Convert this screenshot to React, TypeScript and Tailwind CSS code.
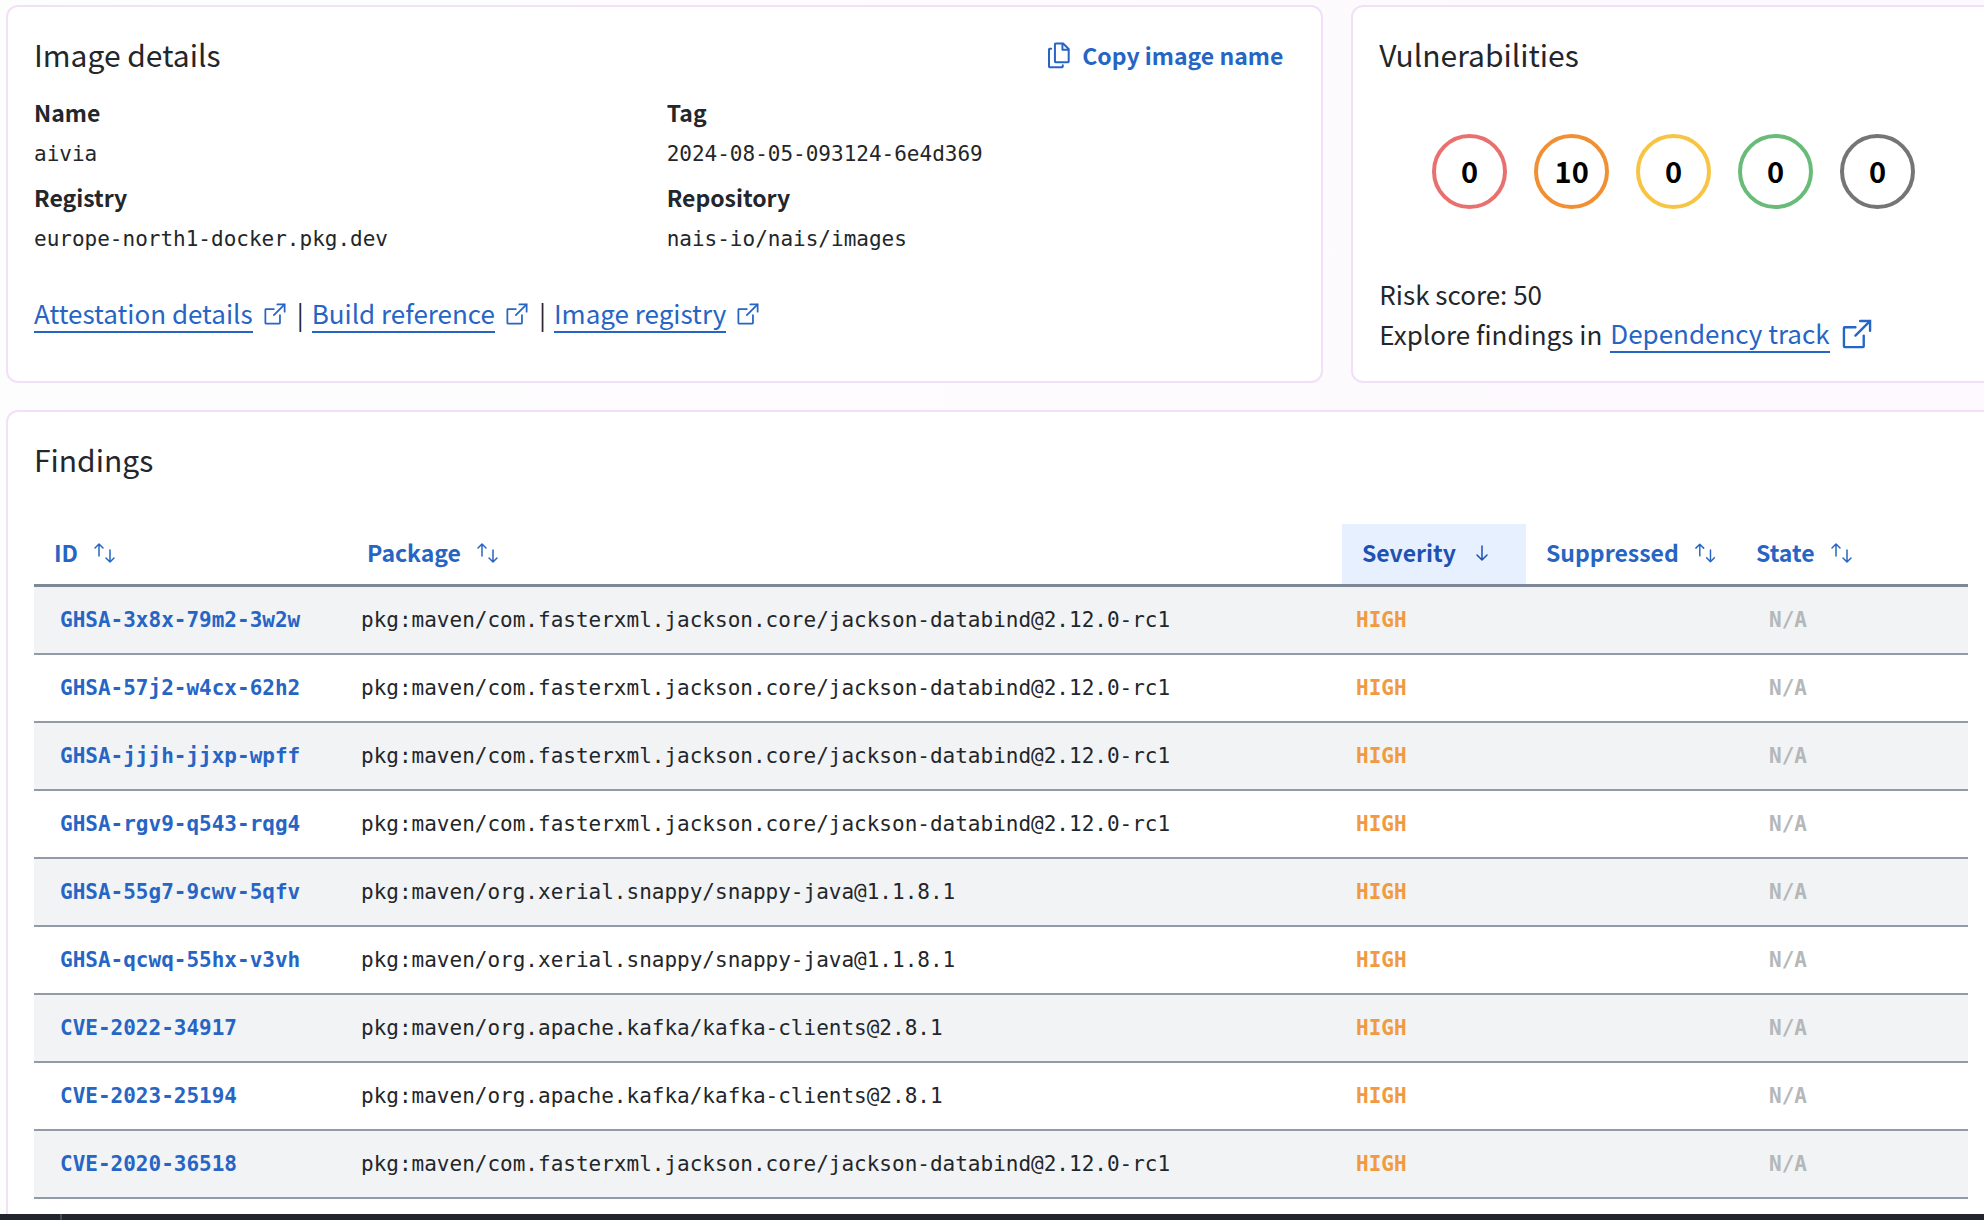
import React from "react";

const sans = "font-['Noto_Sans_CJK_JP','Noto_Sans',sans-serif]";
const mono = "font-['DejaVu_Sans_Mono',monospace] text-[21px]";

const databind = "pkg:maven/com.fasterxml.jackson.core/jackson-databind@2.12.0-rc1";
const snappy = "pkg:maven/org.xerial.snappy/snappy-java@1.1.8.1";
const kafka = "pkg:maven/org.apache.kafka/kafka-clients@2.8.1";

const findings = [
  { id: "GHSA-3x8x-79m2-3w2w", pkg: databind },
  { id: "GHSA-57j2-w4cx-62h2", pkg: databind },
  { id: "GHSA-jjjh-jjxp-wpff", pkg: databind },
  { id: "GHSA-rgv9-q543-rqg4", pkg: databind },
  { id: "GHSA-55g7-9cwv-5qfv", pkg: snappy },
  { id: "GHSA-qcwq-55hx-v3vh", pkg: snappy },
  { id: "CVE-2022-34917", pkg: kafka },
  { id: "CVE-2023-25194", pkg: kafka },
  { id: "CVE-2020-36518", pkg: databind },
];

const severities = [
  { label: "Critical", count: 0, ring: "border-[#e8716f]" },
  { label: "High", count: 10, ring: "border-[#f09033]" },
  { label: "Medium", count: 0, ring: "border-[#f7c443]" },
  { label: "Low", count: 0, ring: "border-[#68bb78]" },
  { label: "Unassigned", count: 0, ring: "border-[#757575]" },
];

function ExternalIcon({ className }: { className: string }) {
  return (
    <svg viewBox="0 0 24 24" fill="none" stroke="currentColor" strokeWidth="1.5" strokeLinejoin="round" className={`text-[#2765c4] ${className}`} aria-hidden="true">
      <path d="M14 3.75h6.25V10" strokeLinejoin="miter" strokeLinecap="round" />
      <path d="M20 4l-9 9" strokeLinecap="round" />
      <path d="M11 7.75H4.25a.5.5 0 0 0-.5.5v11.5a.5.5 0 0 0 .5.5h11.5a.5.5 0 0 0 .5-.5V13" strokeLinecap="round" />
    </svg>
  );
}

function CopyIcon() {
  return (
    <svg viewBox="0 0 24 24" fill="none" stroke="currentColor" strokeWidth="1.6" strokeLinecap="round" strokeLinejoin="round" className="size-[30px]" aria-hidden="true">
      <path d="M9.25 2.75h6l4.5 4.5v10a.5.5 0 0 1-.5.5h-10a.5.5 0 0 1-.5-.5V3.25a.5.5 0 0 1 .5-.5z" />
      <path d="M14.75 3v4.75h4.75" />
      <path d="M5.75 7H4.5a.5.5 0 0 0-.5.5v13.75a.5.5 0 0 0 .5.5h10a.5.5 0 0 0 .5-.5v-1" />
    </svg>
  );
}

function SortIcon() {
  return (
    <svg viewBox="0 0 24 24" fill="none" stroke="currentColor" strokeWidth="1.5" strokeLinecap="round" strokeLinejoin="round" className="size-6" aria-hidden="true">
      <path d="M7 16V4M3 8l4-4 4 4" />
      <path d="M18 10v12M14 18l4 4 4-4" />
    </svg>
  );
}

function DownIcon() {
  return (
    <svg viewBox="0 0 24 24" fill="none" stroke="currentColor" strokeWidth="1.5" strokeLinecap="round" strokeLinejoin="round" className="size-6" aria-hidden="true">
      <path d="M12 6v14M7 15l5 5 5-5" />
    </svg>
  );
}

function Card({ title, className, action, children }: { title: string; className: string; action?: React.ReactNode; children: React.ReactNode }) {
  return (
    <section className={`rounded-xl border-2 border-[#f1e0f7] bg-white px-[26px] pt-[27px] ${className}`}>
      <div className="flex h-10 items-center justify-between">
        <h2 className="text-[30px] leading-10">{title}</h2>
        {action}
      </div>
      {children}
    </section>
  );
}

function Detail({ label, value }: { label: string; value: string }) {
  return (
    <div>
      <dt className="text-[23px] leading-[42px] font-bold">{label}</dt>
      <dd className={`leading-[43px] ${mono}`}>{value}</dd>
    </div>
  );
}

function TextLink({ children }: { children: string }) {
  return (
    <a href="#" className="border-b-2 border-[#2765c4] leading-9 text-[#2765c4]">
      {children}
    </a>
  );
}

function Heading({ label, className = "", active = false }: { label: string; className?: string; active?: boolean }) {
  return (
    <th scope="col" aria-sort={active ? "descending" : "none"} className={`p-0 text-left ${className}`}>
      <button
        type="button"
        className={`flex h-[60px] w-full items-center gap-3.5 px-5 pb-1 text-[23px] leading-8 font-bold ${active ? "bg-[#e6f0ff] text-[#1f51b0]" : "text-[#2765c4]"}`}
      >
        {label}
        {active ? <DownIcon /> : <SortIcon />}
      </button>
    </th>
  );
}

export default function App() {
  return (
    <div className={`flex h-screen flex-col overflow-hidden bg-linear-to-r from-[#fdfdfd] to-[#fdf9ff] text-[#23262a] ${sans}`}>
      <main className="-mr-3 ml-1.5 min-h-0 flex-1 overflow-hidden pt-[5px]">
        <div className="grid grid-cols-12 gap-7">
          <Card
            title="Image details"
            className="col-span-8 h-[378px]"
            action={
              <button type="button" className="mr-3 flex items-center gap-2 pt-0.5 text-[23px] leading-8 font-bold text-[#2765c4]">
                <CopyIcon />
                Copy image name
              </button>
            }
          >
            <dl className="mt-[17px] grid grid-cols-2 gap-x-1">
              <Detail label="Name" value="aivia" />
              <Detail label="Tag" value="2024-08-05-093124-6e4d369" />
              <Detail label="Registry" value="europe-north1-docker.pkg.dev" />
              <Detail label="Repository" value="nais-io/nais/images" />
            </dl>
            <div className="mt-[34px] flex items-center text-[26px] leading-9">
              <TextLink>Attestation details</TextLink>
              <ExternalIcon className="mx-2 size-7" />
              <span className="mr-2">|</span>
              <TextLink>Build reference</TextLink>
              <ExternalIcon className="mx-2 size-7" />
              <span className="mr-2">|</span>
              <TextLink>Image registry</TextLink>
              <ExternalIcon className="mx-2 size-7" />
            </div>
          </Card>

          <Card title="Vulnerabilities" className="col-span-4 h-[378px]">
            <ul className="mt-[60px] flex justify-center gap-[27px]">
              {severities.map((s) => (
                <li
                  key={s.label}
                  title={s.label}
                  className={`flex size-[75px] items-center justify-center rounded-full border-4 pb-1 text-[29px] leading-8 font-bold text-black ${s.ring}`}
                >
                  {s.count}
                </li>
              ))}
            </ul>
            <div className="mt-[65px] text-[26px] leading-10">
              <p>Risk score: 50</p>
              <p className="flex items-center">
                <span className="mr-2">Explore findings in</span>
                <TextLink>Dependency track</TextLink>
                <ExternalIcon className="ml-2 size-[38px]" />
              </p>
            </div>
          </Card>
        </div>

        <Card title="Findings" className="mt-[27px] h-[1000px]">
          <table className="mt-[45px] w-full table-fixed border-collapse">
            <thead>
              <tr className="border-b-3 border-[#7f8797]">
                <Heading label="ID" className="w-[313px]" />
                <Heading label="Package" />
                <Heading label="Severity" className="w-[184px]" active />
                <Heading label="Suppressed" className="w-[210px]" />
                <Heading label="State" className="w-[232px]" />
              </tr>
            </thead>
            <tbody className={mono}>
              {findings.map((f) => (
                <tr key={f.id} className="h-[68px] border-b-2 border-[#949ba8] odd:bg-[#f1f3f5]">
                  <td className="pt-0.5 pl-[26px]">
                    <a href="#" className="font-bold text-[#2765c4]">
                      {f.id}
                    </a>
                  </td>
                  <td className="pt-0.5 pl-3.5">{f.pkg}</td>
                  <td className="pt-0.5 pl-3.5 font-bold text-[#f09a42]">HIGH</td>
                  <td />
                  <td className="pt-0.5 pl-[33px] font-bold text-[#b5b7b9]">N/A</td>
                </tr>
              ))}
            </tbody>
          </table>
        </Card>
      </main>
      <footer className="h-1.5 shrink-0 bg-[#22252e] pl-[60px]">
        <div className="h-full w-0.5 bg-[#474b54]" />
      </footer>
    </div>
  );
}
